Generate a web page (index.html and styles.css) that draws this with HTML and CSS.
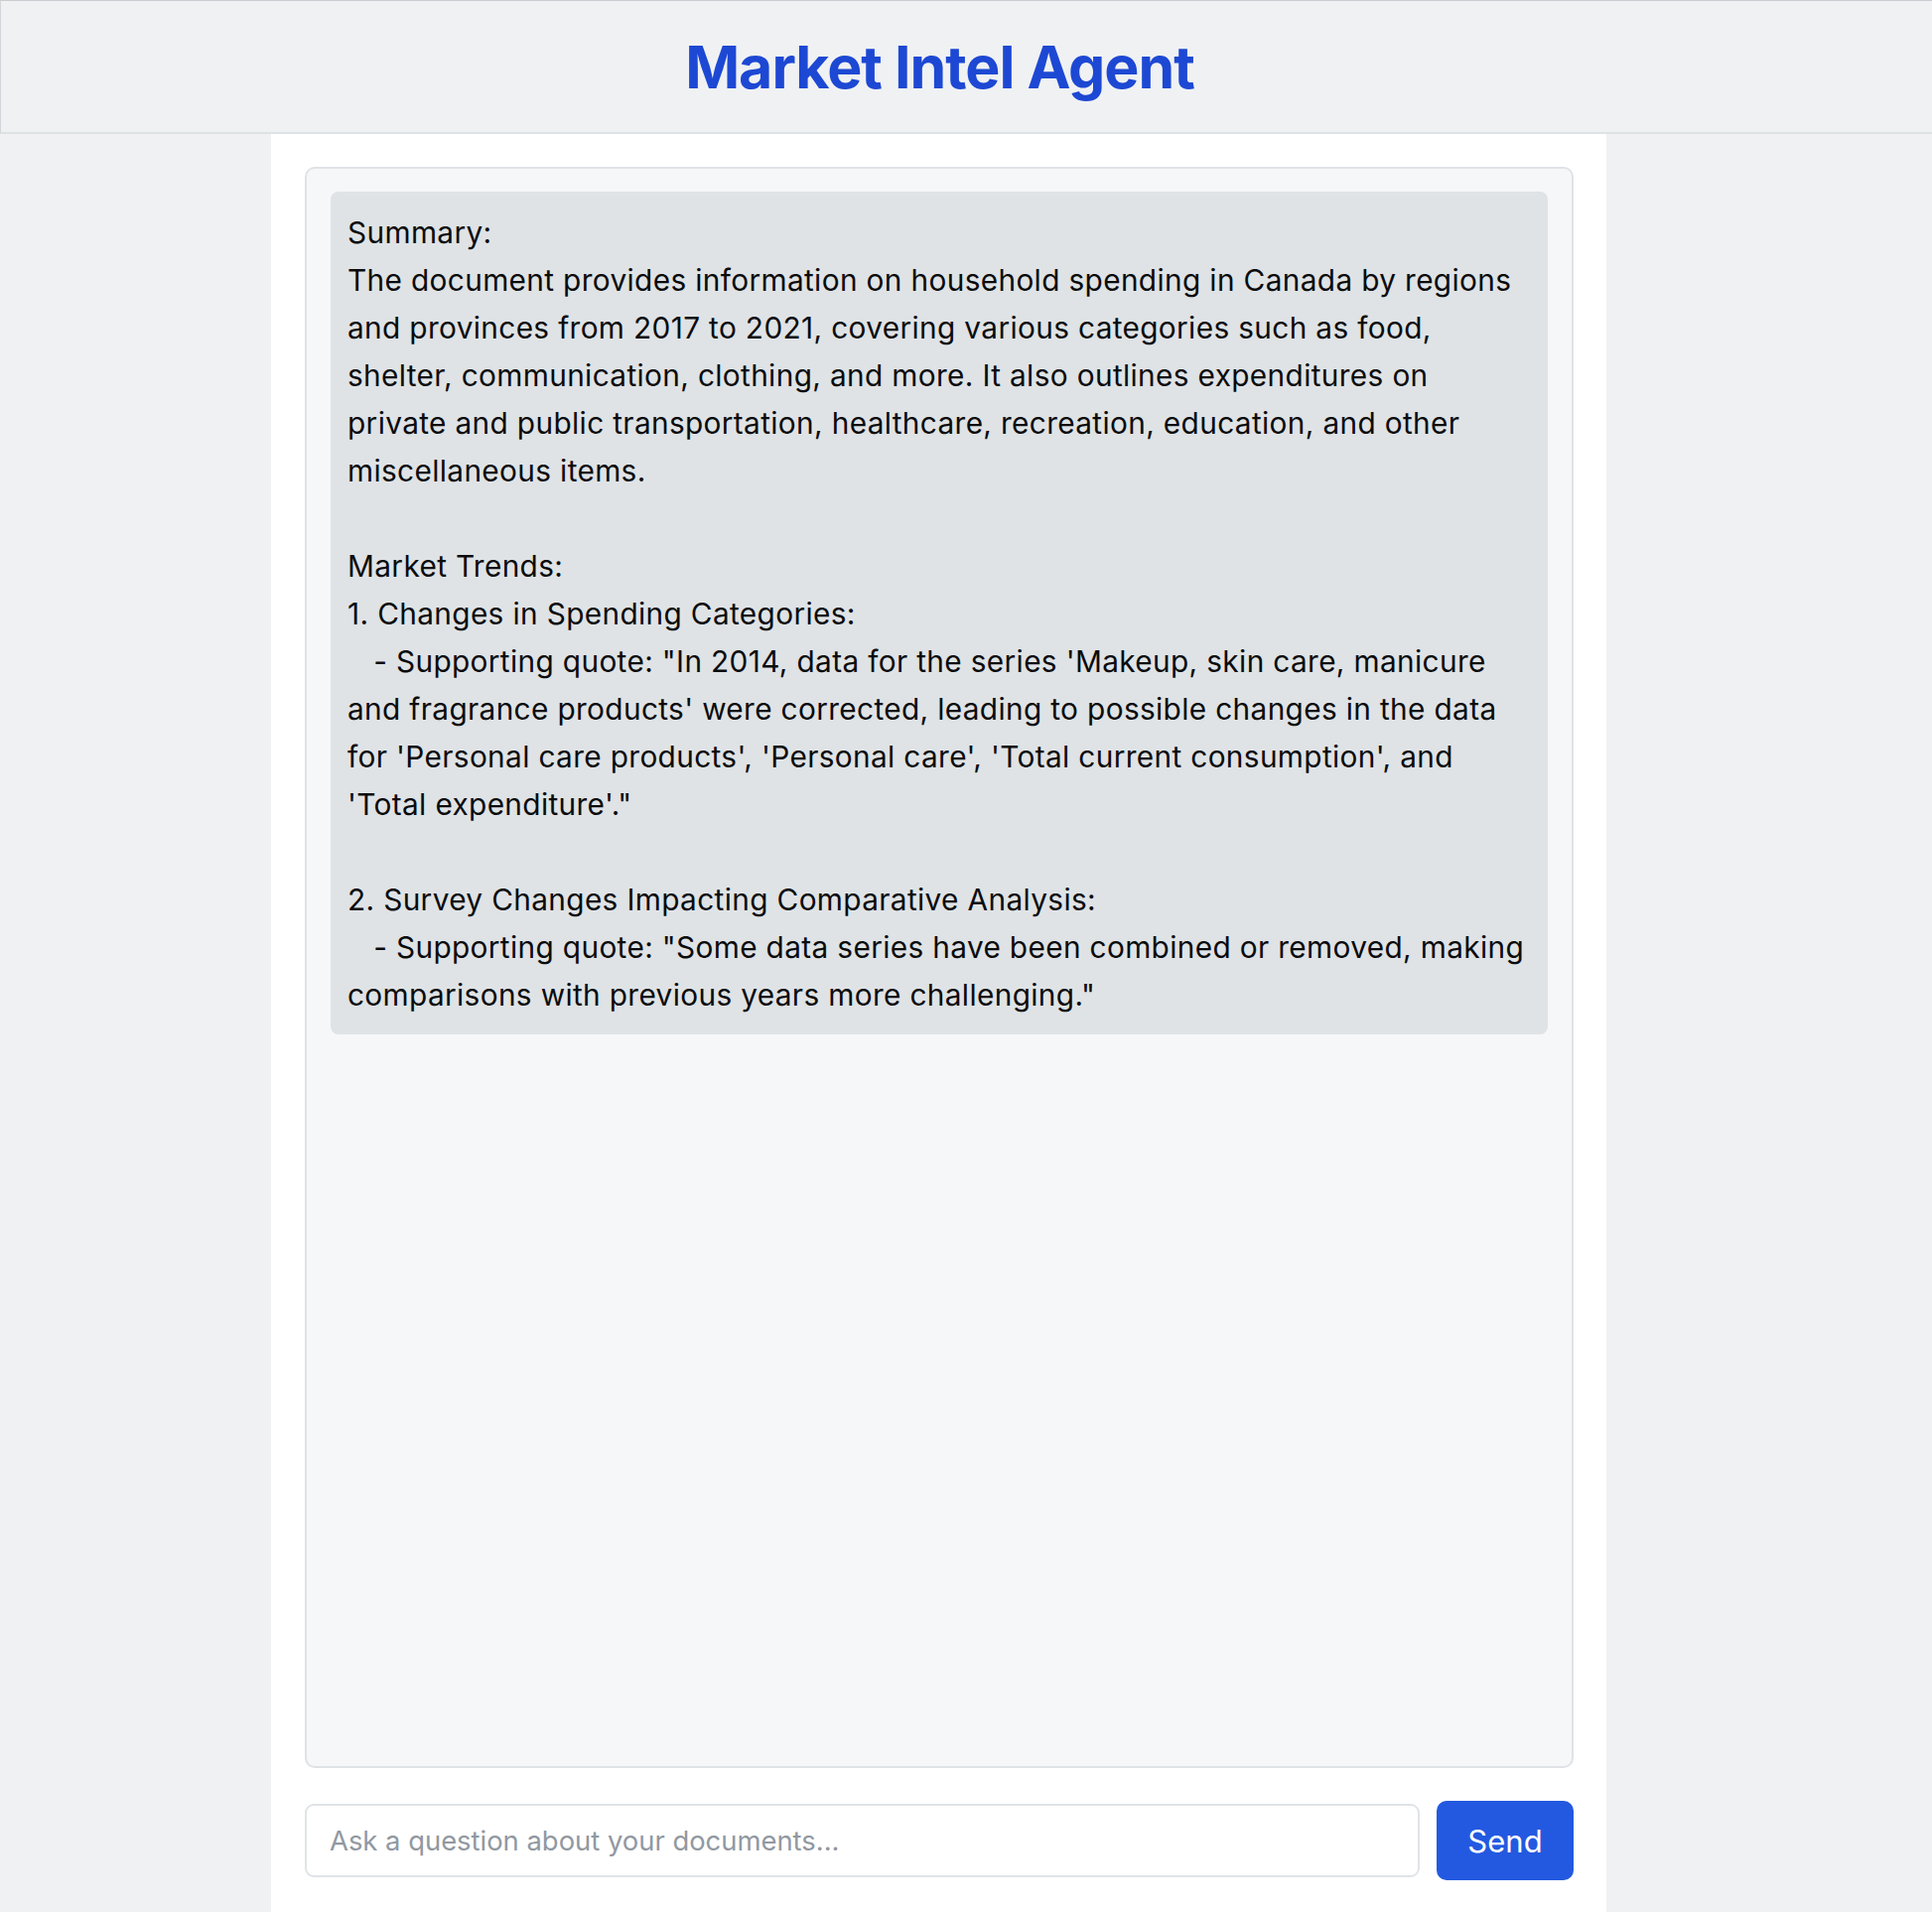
FILE: index.html
```html
<!DOCTYPE html>
<html lang="en">
<head>
<meta charset="utf-8">
<title>Market Intel Agent</title>
<link rel="stylesheet" href="styles.css">
</head>
<body>
<header class="topbar">
  <h1 class="title">Market Intel Agent</h1>
</header>
<main class="panel">
  <section class="chat">
    <div class="bubble">Summary:
The document provides information on household spending in Canada by regions
and provinces from 2017 to 2021, covering various categories such as food,
shelter, communication, clothing, and more. It also outlines expenditures on
private and public transportation, healthcare, recreation, education, and other
miscellaneous items.

Market Trends:
1. Changes in Spending Categories:
   - Supporting quote: "In 2014, data for the series 'Makeup, skin care, manicure
and fragrance products' were corrected, leading to possible changes in the data
for 'Personal care products', 'Personal care', 'Total current consumption', and
'Total expenditure'."

2. Survey Changes Impacting Comparative Analysis:
   - Supporting quote: "Some data series have been combined or removed, making
comparisons with previous years more challenging."</div>
  </section>
  <form class="ask">
    <input class="ask-input" type="text" placeholder="Ask a question about your documents...">
    <button class="ask-btn" type="button">Send</button>
  </form>
</main>
</body>
</html>
```
FILE: styles.css
```css
html, body {
  margin: 0;
  padding: 0;
}
body {
  background: #eff1f3;
  font-family: Inter, "Liberation Sans", Arial, sans-serif;
  color: #0b0b0c;
  height: 1926px;
  overflow: hidden;
}
.topbar {
  box-sizing: border-box;
  height: 135px;
  border-top: 1px solid #c9cdd1;
  border-left: 1px solid #d3d6da;
  border-bottom: 2px solid #dde3e5;
  background: #eff1f3;
  display: flex;
  align-items: center;
  justify-content: center;
  padding-right: 54px;
}
.title {
  margin: 0;
  font-size: 59px;
  font-weight: 700;
  color: #1d48d3;
  letter-spacing: -1px;
}
.panel {
  box-sizing: border-box;
  width: 1345px;
  margin-left: 273px;
  height: 1791px;
  background: #ffffff;
  padding: 33px 33px 32px 34px;
  display: flex;
  flex-direction: column;
}
.chat {
  box-sizing: border-box;
  height: 1613px;
  border: 2px solid #dfe3e6;
  border-radius: 10px;
  background: #f6f7f9;
  padding: 23px 24px;
}
.bubble {
  background: #dfe3e6;
  border-radius: 8px;
  padding: 17px 18px 16px 17px;
  font-size: 29.8px;
  line-height: 48px;
  letter-spacing: 0.35px;
  white-space: pre;
}
.ask {
  margin: 33px 0 0;
  display: flex;
  align-items: center;
  gap: 17px;
}
.ask-input {
  flex: 1;
  box-sizing: border-box;
  height: 74px;
  border: 2px solid #e0e4e7;
  border-radius: 9px;
  background: #ffffff;
  padding: 0 23px;
  font-family: Inter, "Liberation Sans", Arial, sans-serif;
  font-size: 27.4px;
  color: #111;
  outline: none;
}
.ask-input::placeholder {
  color: #9198a1;
}
.ask-btn {
  width: 138px;
  height: 80px;
  border: none;
  border-radius: 10px;
  background: #2359e0;
  color: #ffffff;
  font-family: Inter, "Liberation Sans", Arial, sans-serif;
  font-size: 31px;
  padding: 0;
}
```
